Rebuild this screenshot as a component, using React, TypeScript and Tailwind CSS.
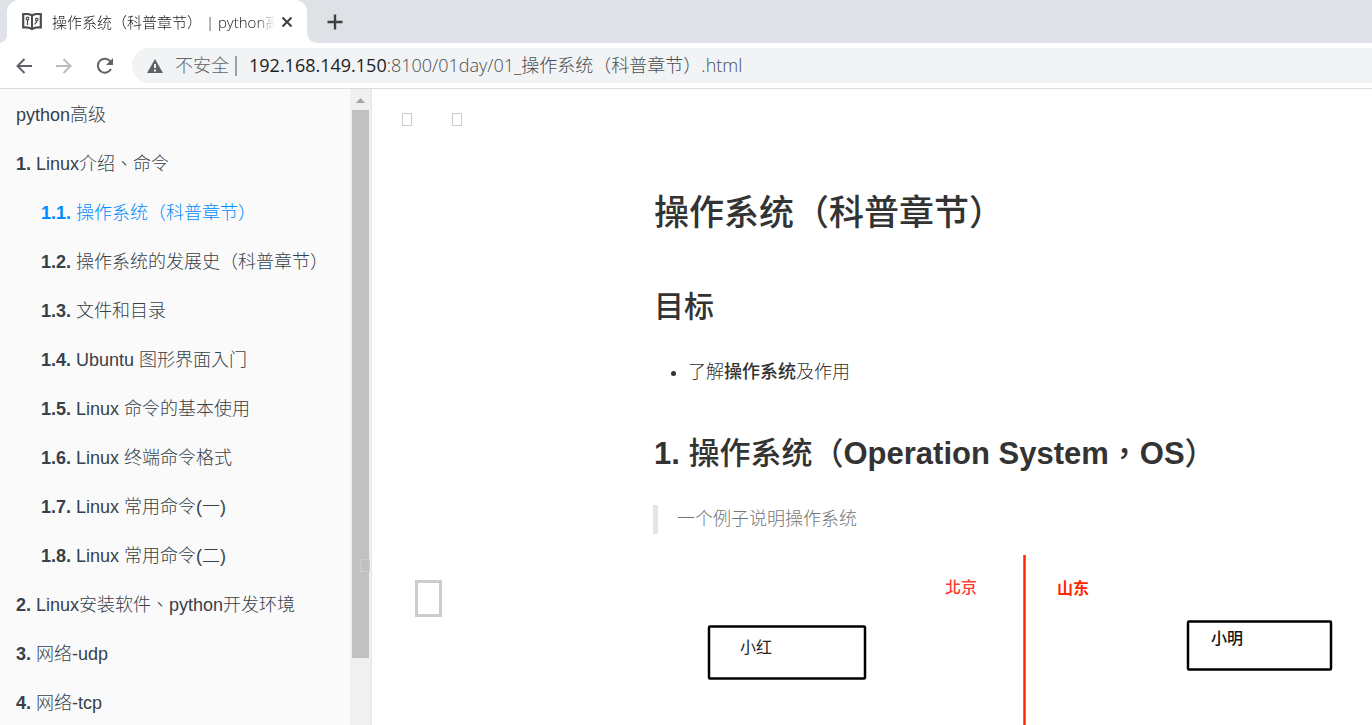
import React, { useState } from 'react';

const chapters = [
  { level: '', title: 'python高级' },
  { level: '1.', title: 'Linux介绍、命令' },
  { level: '1.1.', title: '操作系统（科普章节）' },
  { level: '1.2.', title: '操作系统的发展史（科普章节）' },
  { level: '1.3.', title: '文件和目录' },
  { level: '1.4.', title: 'Ubuntu 图形界面入门' },
  { level: '1.5.', title: 'Linux 命令的基本使用' },
  { level: '1.6.', title: 'Linux 终端命令格式' },
  { level: '1.7.', title: 'Linux 常用命令(一)' },
  { level: '1.8.', title: 'Linux 常用命令(二)' },
  { level: '2.', title: 'Linux安装软件、python开发环境' },
  { level: '3.', title: '网络-udp' },
  { level: '4.', title: '网络-tcp' },
];

function BookIcon() {
  return (
    <svg width="20" height="18" viewBox="0 0 20 18" fill="none" stroke="#4a4d51" className="shrink-0">
      <path d="M10 2.500 C7.500 0.800 4 0.800 1.200 1.200 V14.500 C4 14.200 7.500 14.500 10 16 C12.500 14.500 16 14.200 18.800 14.500 V1.200 C16 0.800 12.500 0.800 10 2.500 Z" strokeWidth="2.200" />
      <path d="M10 2.500 V16" strokeWidth="2" />
      <path d="M5.500 7 V12 M14.500 8 C14.500 11 12.800 9.500 12.800 11.500" strokeWidth="1.300" />
      <circle cx="5.500" cy="5.500" r="1.300" strokeWidth="1.200" />
      <circle cx="14.800" cy="6.500" r="1.300" strokeWidth="1.200" />
    </svg>
  );
}

function TabStrip() {
  return (
    <div className="flex h-[43px] items-stretch bg-[#dee1e6]">
      <svg width="7" height="43" viewBox="0 0 7 43" className="shrink-0">
        <path d="M7 35 V43 H0 C4 42 7 39 7 35 Z" fill="#fff" />
      </svg>
      <div className="flex w-[300px] items-center rounded-t-xl bg-white pl-[15px] pr-3">
        <BookIcon />
        <div className="ml-[10px] flex-1 overflow-hidden whitespace-nowrap pt-px text-[15px] font-light text-[#202124] [mask-image:linear-gradient(to_right,#000_92%,transparent)]">
          操作系统（科普章节） | python高级
        </div>
        <button aria-label="关闭标签页" className="ml-1 flex size-4 items-center justify-center">
          <svg width="12" height="12" viewBox="0 0 12 12" stroke="#3c4043" strokeWidth="2">
            <path d="M1.500 1.500 L10.500 10.500 M10.500 1.500 L1.500 10.500" />
          </svg>
        </button>
      </div>
      <svg width="12" height="43" viewBox="0 0 12 43" className="shrink-0">
        <path d="M0 31 V43 H12 C4 43 0 39 0 31 Z" fill="#fff" />
      </svg>
      <button aria-label="新标签页" className="ml-2 flex w-4 items-center justify-center">
        <svg width="16" height="16" viewBox="0 0 16 16" stroke="#3c4043" strokeWidth="2.400">
          <path d="M8 0.500 V15.500 M0.500 8 H15.500" />
        </svg>
      </button>
    </div>
  );
}

function AddressBar() {
  const [url, setUrl] = useState(':8100/01day/01_操作系统（科普章节）.html');

  return (
    <div className="flex h-[46px] items-center border-b border-[#dadce0] bg-white pl-4">
      <div className="flex gap-6">
        <button aria-label="后退">
          <svg width="16" height="16" viewBox="0 0 16 16" fill="none" stroke="#5f6368" strokeWidth="2">
            <path d="M16 8 H2 M8.500 1 L1.500 8 L8.500 15" />
          </svg>
        </button>
        <button aria-label="前进">
          <svg width="16" height="16" viewBox="0 0 16 16" fill="none" stroke="#babcbe" strokeWidth="2">
            <path d="M0 8 H14 M7.500 1 L14.500 8 L7.500 15" />
          </svg>
        </button>
        <button aria-label="重新加载">
          <svg width="18" height="18" viewBox="0 0 18 18" fill="none" stroke="#5f6368" strokeWidth="2">
            <path d="M14.500 4.500 A7 7 0 1 0 15 12" />
            <path d="M17 1 V8 H10 Z" fill="#5f6368" stroke="none" />
          </svg>
        </button>
      </div>
      <div className="ml-[18px] flex h-[35px] flex-1 items-center rounded-l-full bg-[#f1f3f4] pl-[15px] text-[18px] text-[#5f6368]">
        <svg width="16" height="14" viewBox="0 0 16 14" className="shrink-0">
          <path d="M8 0 L16 14 H0 Z" fill="#5f6368" />
          <path d="M8 5 V9 M8 10.500 V12.500" stroke="#f1f3f4" strokeWidth="2" />
        </svg>
        <span className="ml-3 whitespace-nowrap font-light">不安全</span>
        <span className="ml-[6px] h-5 w-[2px] bg-[#9aa0a6]" />
        <label htmlFor="url" className="ml-3 text-[#202124]">192.168.149.150</label>
        <input
          id="url"
          value={url}
          onChange={e => setUrl(e.target.value)}
          className="min-w-0 flex-1 bg-transparent font-light text-[#4a4e52] outline-none"
        />
      </div>
    </div>
  );
}

function Sidebar() {
  const [active, setActive] = useState('1.1.');

  return (
    <aside className="flex w-[372px] shrink-0 overflow-hidden border-r border-[#e7e7e7] bg-[#fafafa]">
      <nav className="min-w-0 flex-1 pt-[2px]">
        <ul>
          {chapters.map(chapter => (
            <li key={chapter.title}>
              <a
                href="#"
                onClick={() => setActive(chapter.level)}
                className={`block h-[49px] whitespace-nowrap text-[18px] font-light leading-[49px] ${
                  chapter.level.length > 2 ? 'pl-[41px]' : 'pl-4'
                } ${active === chapter.level ? 'text-[#008cff]' : 'text-[#364149]'}`}
              >
                {chapter.level && <b className="font-bold">{chapter.level} </b>}
                {chapter.title}
              </a>
            </li>
          ))}
        </ul>
      </nav>
      <div className="relative w-[21px] bg-[#f0f0f0] px-[2px]">
        <div className="flex h-[21px] items-center justify-center pt-[2px]">
          <svg width="9" height="5" viewBox="0 0 9 5">
            <path d="M4.500 0 L9 5 H0 Z" fill="#a3a3a3" />
          </svg>
        </div>
        <div className="h-[548px] bg-[#c1c1c1]" />
        <span className="absolute right-[1px] top-[470px] h-[13px] w-[10px] border border-[#cccccc]" />
      </div>
    </aside>
  );
}

function Diagram() {
  return (
    <svg width="720" height="300" viewBox="0 0 720 300" className="mt-[21px] block max-w-none text-[16px] font-medium">
      <path d="M370.500 0 V300" stroke="#ff2600" strokeWidth="2.500" />
      <g fill="none" stroke="#000" strokeWidth="2.500" strokeLinejoin="round">
        <rect x="55" y="71.500" width="156" height="52" rx="1" />
        <rect x="534" y="66.500" width="143" height="48" rx="1" />
      </g>
      <text x="291" y="38" fill="#ff3b30">北京</text>
      <text x="403" y="39" fill="#ff2600" className="font-bold">山东</text>
      <text x="86" y="98" fill="#222" className="font-normal">小红</text>
      <text x="557" y="89" fill="#111">小明</text>
    </svg>
  );
}

function Content() {
  return (
    <main className="relative min-w-0 flex-1 overflow-hidden bg-white text-[#333333]">
      <div className="absolute left-[30px] top-6 flex gap-10">
        <button aria-label="目录" className="h-[13px] w-[10px] border border-[#cccccc]" />
        <button aria-label="字体" className="h-[13px] w-[10px] border border-[#cccccc]" />
      </div>
      <button aria-label="上一章" className="absolute left-[43px] top-[491px] h-[37px] w-[27px] border-3 border-[#cccccc]" />
      <article className="pl-[282px] pt-[102px] text-[18px]">
        <h1 className="whitespace-nowrap text-[35px] font-medium leading-[44px]">操作系统（科普章节）</h1>
        <h2 className="mt-[52px] text-[30px] font-medium leading-[40px]">目标</h2>
        <ul className="mt-[30px] list-disc pl-[34px] font-light leading-[30px]">
          <li>了解<strong className="font-medium">操作系统</strong>及作用</li>
        </ul>
        <h2 className="mt-[47px] whitespace-nowrap text-[31px] font-medium leading-[40px]">
          <b>1.</b> 操作系统（<b>Operation System</b>，<b>OS</b>）
        </h2>
        <blockquote className="-ml-px mt-[31px] border-l-5 border-[#e5e5e5] pl-[19px] font-light leading-[29px] text-[#757575]">
          一个例子说明操作系统
        </blockquote>
        <Diagram />
      </article>
    </main>
  );
}

export default function App() {
  return (
    <div className="flex h-screen flex-col overflow-hidden bg-white">
      <header className="shrink-0 font-['Open_Sans','Noto_Sans_CJK_SC',sans-serif]">
        <TabStrip />
        <AddressBar />
      </header>
      <div className="flex min-h-0 flex-1 font-['Liberation_Sans','Noto_Sans_CJK_TC',sans-serif]">
        <Sidebar />
        <Content />
      </div>
    </div>
  );
}
